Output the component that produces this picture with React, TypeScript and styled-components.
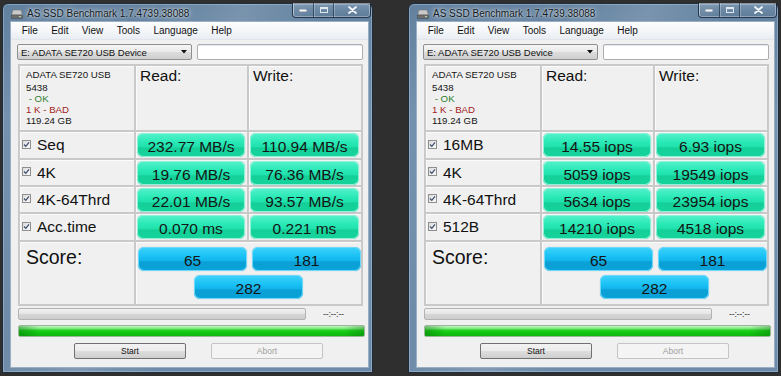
import React from "react";
import styled, { createGlobalStyle } from "styled-components";

const GlobalStyle = createGlobalStyle`
  html, body { margin: 0; padding: 0; }
  body {
    width: 781px;
    height: 376px;
    overflow: hidden;
    background: #2f2f2f;
    font-family: "Liberation Sans", Arial, sans-serif;
  }
`;

const Desktop = styled.div`
  display: flex;
  gap: 35px;
  padding: 3px 0 0 2px;
  height: 376px;
  box-sizing: border-box;
`;

const Window = styled.div`
  width: 371px;
  height: 370px;
  box-sizing: border-box;
  border: 1px solid #1f2c3a;
  border-radius: 6px 6px 0 0;
  background:
    linear-gradient(115deg, rgba(255,255,255,0) 30%, rgba(255,255,255,0.14) 45%, rgba(255,255,255,0) 60%),
    linear-gradient(180deg, #62819f 0%, #7491ae 30%, #6d8aa8 100%);
  box-shadow: inset 0 0 0 1px rgba(200, 220, 240, 0.35);
  padding: 0 3px 4px 7px;
  display: flex;
  flex-direction: column;
`;

const TitleBar = styled.div`
  height: 17px;
  flex: none;
  display: flex;
  align-items: flex-start;
`;

const TitleIcon = styled.svg`
  width: 12px;
  height: 10px;
  margin: 5px 4px 0 1px;
  flex: none;
`;

const TitleText = styled.div`
  font-family: "Liberation Sans Narrow", "Liberation Sans", Arial, sans-serif;
  font-size: 10px;
  line-height: 12px;
  margin-top: 4px;
  color: #101820;
  text-shadow: 0 0 6px rgba(255,255,255,0.9), 0 0 2px rgba(255,255,255,0.8);
`;

const Controls = styled.div`
  margin-left: auto;
  margin-right: -2px;
  margin-top: -1px;
  display: flex;
  height: 14px;
  border: 1px solid rgba(20, 35, 55, 0.8);
  border-top: none;
  border-radius: 0 0 4px 4px;
  box-shadow: inset 0 0 0 1px rgba(210, 225, 240, 0.45);
  overflow: hidden;
`;

const CtrlButton = styled.div<{ $w: number }>`
  width: ${(p) => p.$w}px;
  height: 100%;
  display: flex;
  align-items: center;
  justify-content: center;
  border-left: 1px solid rgba(20, 35, 55, 0.6);
  box-shadow: inset 1px 0 0 rgba(210, 225, 240, 0.35);
  background: linear-gradient(180deg, rgba(255,255,255,0.18), rgba(255,255,255,0.04) 50%, rgba(0,0,0,0.05));
  &:first-child { border-left: none; }
`;

const Client = styled.div`
  flex: 1;
  background: #f0f0f0;
  border: 1px solid #9aaec4;
  display: flex;
  flex-direction: column;
  min-height: 0;
`;

const MenuBar = styled.div`
  height: 17px;
  display: flex;
  align-items: center;
  padding-left: 4px;
  background: linear-gradient(180deg, #fdfdfe 0%, #f3f5f8 60%, #e9edf2 100%);
  border-bottom: 1px solid #e2e6ec;
`;

const MenuItem = styled.div`
  font-family: "Liberation Sans Narrow", "Liberation Sans", Arial, sans-serif;
  font-size: 10px;
  color: #111;
  padding: 0 6.7px;
`;

const ToolRow = styled.div`
  display: flex;
  gap: 5px;
  margin: 4px 0 0 6px;
  height: 16px;
`;

const Combo = styled.div`
  width: 175px;
  box-sizing: border-box;
  border: 1px solid #8e8f8f;
  border-radius: 2px;
  background: linear-gradient(180deg, #f6f6f6 0%, #e9e9e9 50%, #dcdcdc 51%, #cfcfcf 100%);
  display: flex;
  align-items: center;
  padding-left: 3px;
  font-family: "Liberation Sans Narrow", "Liberation Sans", Arial, sans-serif;
  font-size: 9.5px;
  color: #111;
`;

const ComboArrow = styled.svg`
  width: 6px;
  height: 4px;
  margin-left: auto;
  margin-right: 4px;
`;

const TextBox = styled.div`
  width: 166px;
  box-sizing: border-box;
  border: 1px solid #abadb3;
  border-radius: 2px;
  background: #fff;
  box-shadow: inset 0 1px 0 #e3e9ef;
`;

const Grid = styled.div`
  margin: 4px 0 0 7px;
  width: 345px;
  box-sizing: border-box;
  padding: 2px;
  background: #c9c9c9;
  display: grid;
  grid-template-columns: 114px 111px 112px;
  grid-template-rows: 64px 26px 25px 25px 26px 62px;
  gap: 2px;
`;

const Cell = styled.div<{ $span?: number }>`
  background: #f0f0f0;
  box-shadow: inset 1px 1px 0 #fbfbfb;
  grid-column: ${(p) => (p.$span ? `span ${p.$span}` : "auto")};
  min-width: 0;
`;

const InfoCell = styled(Cell)`
  padding: 3px 0 0 6px;
  font-family: "Liberation Sans", Arial, sans-serif;
  font-size: 9.7px;
  line-height: 11px;
  color: #111;
`;

const InfoLine = styled.div<{ $color?: string; $gap?: number }>`
  color: ${(p) => p.$color || "#151515"};
  margin-bottom: ${(p) => p.$gap || 0}px;
  white-space: pre;
`;

const HeadCell = styled(Cell)`
  padding: 1px 0 0 4px;
  font-size: 15.5px;
  line-height: 18px;
  color: #111;
`;

const LabelCell = styled(Cell)`
  display: flex;
  align-items: center;
  padding-left: 2px;
  font-size: 15.5px;
  color: #111;
`;

const Check = styled.div`
  width: 9px;
  height: 9px;
  box-sizing: border-box;
  border: 1px solid #8f8f8f;
  background: linear-gradient(135deg, #dcdcdc, #fafafa);
  margin-right: 6px;
  margin-top: -2px;
  display: flex;
  align-items: center;
  justify-content: center;
`;

const BoxCell = styled(Cell)`
  padding: 1px 2px 0 1px;
`;

const ResultBox = styled.div<{ $blue?: boolean }>`
  height: 24px;
  box-sizing: border-box;
  border-radius: 6px;
  display: flex;
  align-items: center;
  justify-content: center;
  padding-top: 4px;
  font-size: 15.5px;
  color: #141414;
  background: ${(p) =>
    p.$blue
      ? "linear-gradient(180deg, #3fd2fb 0%, #19c1f5 40%, #12b3ea 58%, #0b9fd5 62%, #0aa3d9 100%)"
      : "linear-gradient(180deg, #55f2cc 0%, #28e8b5 40%, #20e1ac 58%, #14cf98 62%, #16d39c 100%)"};
  box-shadow: ${(p) =>
    p.$blue
      ? "inset 0 0 0 1px #70d9f8, 0 0 1px rgba(0,120,180,0.4)"
      : "inset 0 0 0 1px #8ff2d8, 0 0 1px rgba(0,140,100,0.4)"};
`;

const ScoreLabel = styled(Cell)`
  padding: 4px 0 0 6px;
  font-size: 19.5px;
  line-height: 22px;
  color: #111;
`;

const ScoreArea = styled(Cell)`
  display: grid;
  grid-template-columns: 109px 109px;
  grid-template-rows: 24px 24px;
  column-gap: 5px;
  row-gap: 4px;
  padding: 5px 0 0 2px;
  justify-content: start;
`;

const TotalBox = styled(ResultBox)`
  grid-column: 1 / span 2;
  justify-self: center;
  width: 109px;
  margin-left: -2px;
`;

const ProgressRow = styled.div`
  display: flex;
  align-items: center;
  margin: 2px 0 0 7px;
  height: 12px;
`;

const GrayBar = styled.div`
  width: 288px;
  height: 12px;
  box-sizing: border-box;
  border: 1px solid #b2b2b2;
  border-radius: 2px;
  background: linear-gradient(180deg, #f2f2f2 0%, #e4e4e4 50%, #d6d6d6 51%, #cfcfcf 100%);
`;

const TimeText = styled.div`
  font-family: "Liberation Sans Narrow", "Liberation Sans", Arial, sans-serif;
  font-size: 9px;
  color: #333;
  margin-left: 17px;
  letter-spacing: -0.3px;
`;

const GreenBar = styled.div`
  margin: 5px 0 0 7px;
  width: 347px;
  height: 12px;
  box-sizing: border-box;
  border: 1px solid #9ab79a;
  border-radius: 2px;
  background:
    linear-gradient(90deg, rgba(0,90,0,0.35) 0%, rgba(0,90,0,0) 6%, rgba(0,90,0,0) 94%, rgba(0,90,0,0.3) 100%),
    linear-gradient(180deg, #c4f7c4 0%, #7ee87e 25%, #1fd11f 45%, #12c412 70%, #0fb60f 100%);
`;

const ButtonRow = styled.div`
  display: flex;
  gap: 25px;
  margin: 6px 0 0 63px;
`;

const Button = styled.div<{ $disabled?: boolean }>`
  width: 112px;
  height: 16px;
  box-sizing: border-box;
  border: 1px solid ${(p) => (p.$disabled ? "#c4c4c4" : "#707070")};
  border-radius: 2px;
  background: ${(p) =>
    p.$disabled
      ? "#f4f4f4"
      : "linear-gradient(180deg, #f2f2f2 0%, #ebebeb 50%, #dddddd 51%, #cfcfcf 100%)"};
  display: flex;
  align-items: center;
  justify-content: center;
  font-family: "Liberation Sans Narrow", "Liberation Sans", Arial, sans-serif;
  font-size: 8.5px;
  color: ${(p) => (p.$disabled ? "#a0a0a0" : "#111")};
`;

type Row = { label: string; read: string; write: string };

const leftRows: Row[] = [
  { label: "Seq", read: "232.77 MB/s", write: "110.94 MB/s" },
  { label: "4K", read: "19.76 MB/s", write: "76.36 MB/s" },
  { label: "4K-64Thrd", read: "22.01 MB/s", write: "93.57 MB/s" },
  { label: "Acc.time", read: "0.070 ms", write: "0.221 ms" },
];

const rightRows: Row[] = [
  { label: "16MB", read: "14.55 iops", write: "6.93 iops" },
  { label: "4K", read: "5059 iops", write: "19549 iops" },
  { label: "4K-64Thrd", read: "5634 iops", write: "23954 iops" },
  { label: "512B", read: "14210 iops", write: "4518 iops" },
];

const CheckMark = () => (
  <svg width="7" height="7" viewBox="0 0 7 7">
    <path d="M1 3.5 L2.8 5.3 L6 1.4" fill="none" stroke="#3b4a6b" strokeWidth="1.2" />
  </svg>
);

const BenchWindow: React.FC<{ rows: Row[] }> = ({ rows }) => (
  <Window>
    <TitleBar>
      <TitleIcon viewBox="0 0 12 10">
        <path d="M2 1 H10 L11.5 6 H0.5 Z" fill="#c9c9c9" stroke="#777" strokeWidth="0.6" />
        <rect x="0.5" y="6" width="11" height="3.5" fill="#6e6e6e" stroke="#444" strokeWidth="0.5" />
        <rect x="8" y="7.2" width="2" height="1" fill="#bfe8bf" />
      </TitleIcon>
      <TitleText>AS SSD Benchmark 1.7.4739.38088</TitleText>
      <Controls>
        <CtrlButton $w={20}>
          <svg width="8" height="3" viewBox="0 0 8 3">
            <rect x="0" y="0" width="8" height="3" fill="#f4f7fa" stroke="#3a4a5c" strokeWidth="0.6" />
          </svg>
        </CtrlButton>
        <CtrlButton $w={19}>
          <svg width="8" height="6" viewBox="0 0 8 6">
            <rect x="0.5" y="0.5" width="7" height="5" fill="none" stroke="#dfe7ef" strokeWidth="1" />
            <rect x="0.5" y="0.5" width="7" height="1.6" fill="#dfe7ef" />
          </svg>
        </CtrlButton>
        <CtrlButton $w={36}>
          <svg width="9" height="8" viewBox="0 0 9 8">
            <path d="M1 1 L8 7 M8 1 L1 7" stroke="#f4f7fa" strokeWidth="1.8" strokeLinecap="round" />
          </svg>
        </CtrlButton>
      </Controls>
    </TitleBar>
    <Client>
      <MenuBar>
        {["File", "Edit", "View", "Tools", "Language", "Help"].map((m) => (
          <MenuItem key={m}>{m}</MenuItem>
        ))}
      </MenuBar>
      <ToolRow>
        <Combo>
          E: ADATA SE720 USB Device
          <ComboArrow viewBox="0 0 6 4">
            <path d="M0 0 H6 L3 3.5 Z" fill="#111" />
          </ComboArrow>
        </Combo>
        <TextBox />
      </ToolRow>
      <Grid>
        <InfoCell>
          <InfoLine $gap={2}>ADATA SE720 USB</InfoLine>
          <InfoLine>5438</InfoLine>
          <InfoLine $color="#2f7d2f"> - OK</InfoLine>
          <InfoLine $color="#a31c1c">1 K - BAD</InfoLine>
          <InfoLine>119.24 GB</InfoLine>
        </InfoCell>
        <HeadCell>Read:</HeadCell>
        <HeadCell>Write:</HeadCell>
        {rows.map((r) => (
          <React.Fragment key={r.label}>
            <LabelCell>
              <Check>
                <CheckMark />
              </Check>
              {r.label}
            </LabelCell>
            <BoxCell>
              <ResultBox>{r.read}</ResultBox>
            </BoxCell>
            <BoxCell>
              <ResultBox>{r.write}</ResultBox>
            </BoxCell>
          </React.Fragment>
        ))}
        <ScoreLabel>Score:</ScoreLabel>
        <ScoreArea $span={2}>
          <ResultBox $blue>65</ResultBox>
          <ResultBox $blue>181</ResultBox>
          <TotalBox $blue>282</TotalBox>
        </ScoreArea>
      </Grid>
      <ProgressRow>
        <GrayBar />
        <TimeText>--:--:--</TimeText>
      </ProgressRow>
      <GreenBar />
      <ButtonRow>
        <Button>Start</Button>
        <Button $disabled>Abort</Button>
      </ButtonRow>
    </Client>
  </Window>
);

export default function App() {
  return (
    <>
      <GlobalStyle />
      <Desktop>
        <BenchWindow rows={leftRows} />
        <BenchWindow rows={rightRows} />
      </Desktop>
    </>
  );
}
